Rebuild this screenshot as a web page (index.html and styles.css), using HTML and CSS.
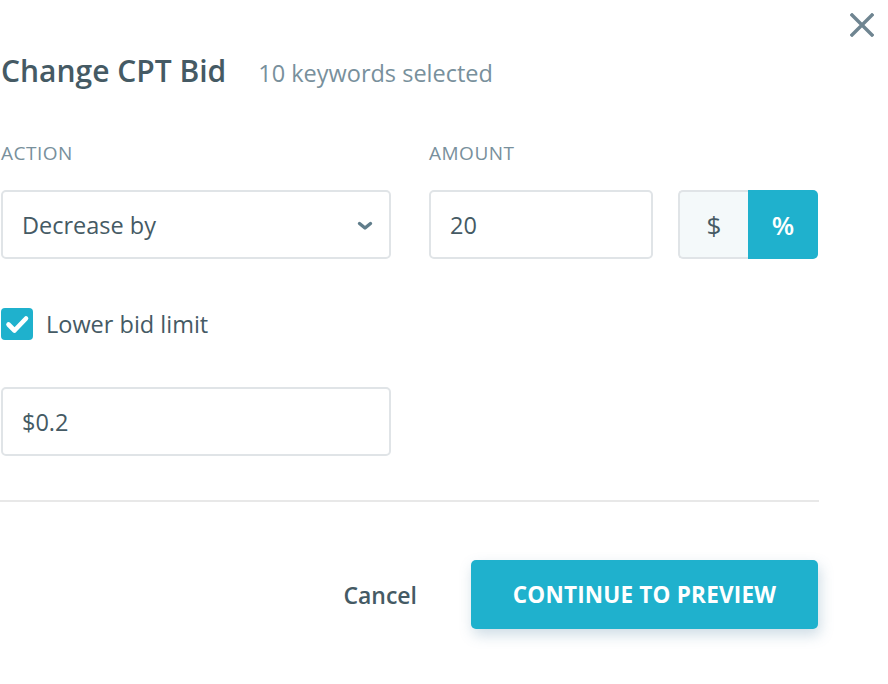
FILE: index.html
```html
<!DOCTYPE html>
<html lang="en">
<head>
<meta charset="utf-8">
<title>Change CPT Bid</title>
<link rel="stylesheet" href="styles.css">
</head>
<body>
<div class="dialog">
  <button class="close" aria-label="Close">
    <svg width="24" height="24" viewBox="0 0 24 24"><path d="M2 2 L22 22 M22 2 L2 22" stroke="#6f8591" stroke-width="3.4" stroke-linecap="square" fill="none"/></svg>
  </button>
  <div class="header">
    <h1 class="title">Change CPT Bid</h1>
    <span class="subtitle">10 keywords selected</span>
  </div>
  <div class="fields">
    <div class="field field-action">
      <div class="label">ACTION</div>
      <div class="select">
        <span>Decrease by</span>
        <svg class="chev" width="16" height="10" viewBox="0 0 16 10"><path d="M2.5 2.5 L8 7 L13.5 2.5" stroke="#607d8b" stroke-width="3.4" fill="none" stroke-linecap="round" stroke-linejoin="round"/></svg>
      </div>
    </div>
    <div class="field field-amount">
      <div class="label">AMOUNT</div>
      <div class="amount-row">
        <div class="input amount-input">20</div>
        <div class="toggle">
          <span class="seg seg-off">$</span>
          <span class="seg seg-on">%</span>
        </div>
      </div>
    </div>
  </div>
  <label class="check-row">
    <span class="checkbox">
      <svg width="32" height="32" viewBox="0 0 32 32"><path d="M7.5 16.5 L13.5 22.5 L25 10.5" stroke="#fff" stroke-width="4.6" fill="none" stroke-linecap="round" stroke-linejoin="round"/></svg>
    </span>
    <span class="check-text">Lower bid limit</span>
  </label>
  <div class="input limit-input">$0.2</div>
  <div class="divider"></div>
  <div class="actions">
    <button class="cancel">Cancel</button>
    <button class="primary">CONTINUE TO PREVIEW</button>
  </div>
</div>
</body>
</html>
```
FILE: styles.css
```css
* { box-sizing: border-box; }
html, body { margin: 0; padding: 0; background: #fff; }
body {
  font-family: "Open Sans", "Noto Sans", sans-serif;
  color: #455a64;
  width: 888px;
  height: 684px;
  overflow: hidden;
}
.dialog {
  position: relative;
  width: 888px;
  height: 684px;
  padding: 51px 70px 0 1px;
}
.close {
  position: absolute;
  top: 13px;
  left: 850px;
  width: 24px;
  height: 24px;
  padding: 0;
  border: 0;
  background: none;
  display: block;
}
.close svg { display: block; }
.header {
  display: flex;
  align-items: baseline;
  height: 40px;
}
.title {
  margin: 0;
  font-size: 30px;
  line-height: 40px;
  font-weight: 600;
  color: #455a64;
}
.subtitle {
  margin-left: 32px;
  font-size: 23.5px;
  line-height: 40px;
  color: #78909c;
}
.fields {
  display: flex;
  margin-top: 50px;
}
.label {
  font-size: 19px;
  line-height: 24px;
  color: #78909c;
  letter-spacing: 0.5px;
  margin-bottom: 25px;
}
.field-action { width: 390px; }
.field-amount { margin-left: 38px; }
.select, .input {
  height: 69px;
  border: 2px solid #e0e4e7;
  border-radius: 5px;
  display: flex;
  align-items: center;
  padding: 0 19px;
  font-size: 23.5px;
  color: #455a64;
  background: #fff;
}
.select {
  width: 390px;
  justify-content: space-between;
  padding-right: 16px;
}
.chev { display: block; margin-top: 2px; }
.amount-row { display: flex; }
.amount-input { width: 224px; }
.toggle {
  display: flex;
  margin-left: 25px;
  height: 69px;
}
.seg {
  width: 70px;
  display: flex;
  align-items: center;
  justify-content: center;
  font-size: 26px;
  font-weight: 600;
}
.seg-off {
  background: #f4f9fa;
  border: 2px solid #e0e4e7;
  border-right: 0;
  border-radius: 5px 0 0 5px;
  color: #455a64;
  font-weight: 400;
}
.seg-on {
  background: #1fb1cd;
  color: #fff;
  border-radius: 0 5px 5px 0;
}
.check-row {
  display: flex;
  align-items: center;
  margin-top: 49px;
  height: 32px;
}
.checkbox {
  width: 32px;
  height: 32px;
  border-radius: 4px;
  background: #1fb1cd;
  display: block;
}
.checkbox svg { display: block; }
.check-text {
  margin-left: 13px;
  font-size: 23.5px;
  color: #455a64;
}
.limit-input {
  width: 390px;
  margin-top: 47px;
}
.divider {
  height: 2px;
  background: #e8e8e8;
  margin: 44px 0 0 -1px;
  width: 819px;
}
.actions {
  display: flex;
  justify-content: flex-end;
  align-items: center;
  margin-top: 58px;
}
.cancel {
  border: 0;
  background: none;
  padding: 0;
  font-family: inherit;
  font-size: 23px;
  font-weight: 600;
  color: #455a64;
  margin-right: 54px;
}
.primary {
  width: 347px;
  height: 69px;
  border: 0;
  border-radius: 5px;
  background: #1fb1cd;
  color: #fff;
  font-family: inherit;
  font-size: 22.5px;
  font-weight: 700;
  letter-spacing: 0.2px;
  box-shadow: 2px 6px 14px rgba(80, 130, 160, 0.28);
}
```
